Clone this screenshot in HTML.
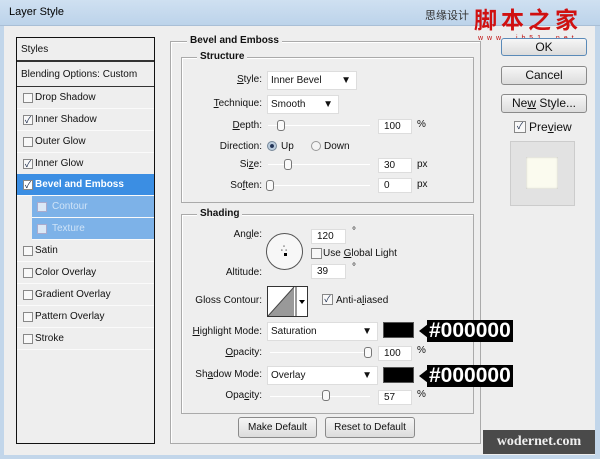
<!DOCTYPE html>
<html><head><meta charset="utf-8"><style>
*{margin:0;padding:0;box-sizing:border-box}
body{width:600px;height:459px;overflow:hidden;background:#eeeeee;font-family:"Liberation Sans","Noto Sans CJK SC",sans-serif;font-size:10px;color:#111;position:relative}
.a{position:absolute;white-space:nowrap}
.title{left:0;top:0;width:600px;height:26px;background:linear-gradient(#cfe0f1,#bcd3ea);border-bottom:1px solid #a9bfd6}
.frame{left:0;top:26px;width:600px;height:433px;border-left:4px solid #c2d6ea;border-right:5px solid #c2d6ea;border-bottom:4px solid #c2d6ea}
.lp{left:16px;top:37px;width:139px;height:407px;border:1px solid #111;background:#eeeeee}
.row{position:absolute;left:0;width:137px;height:22px;line-height:22px;padding-left:18px;border-bottom:1px solid #fafafa}
.cb{position:absolute;width:10px;height:10px;border:1px solid #888;background:#f8f8f8;font-size:9px;line-height:8px;text-align:center;color:#124}
.lbl{position:absolute;text-align:right;width:90px}
.sel{background:#fff;border:1px solid #ddd;padding-left:3px;line-height:17px;height:19px}
.inp{background:#fff;border:1px solid #ddd;padding-left:5px;height:15px;line-height:14px}
.btn{border:1px solid #8a8a8a;border-radius:3px;background:linear-gradient(#f6f6f6,#dcdcdc);text-align:center;font-size:12px}
.line{height:1px;background:#aaa;border-bottom:1px solid #fff}
.knob{width:8px;height:11px;border:1px solid #777;border-radius:3px;background:#fafafa}
.gb{border:1px solid #aaa;box-shadow:1px 1px 0 #fff inset}
.leg{background:#eeeeee;font-weight:bold;font-size:10px;padding:0 3px}
.tag{background:#000;color:#fff;font-weight:bold;font-size:21px;line-height:22px;height:22px;padding:0 2px;font-family:"Liberation Sans",sans-serif}
</style></head><body>
<div class="a title"></div>
<div class="a" style="left:9px;top:6px;font-size:11px;color:#000">Layer Style</div>
<div class="a" style="left:425px;top:7px;font-size:11px;color:#333">思缘设计</div>
<div class="a" style="left:474px;top:1px;font-size:23px;font-weight:bold;color:#d01010;font-family:'Noto Sans CJK SC',sans-serif;letter-spacing:4px">脚本之家</div>
<div class="a" style="left:478px;top:35px;font-size:7px;color:#c01010;letter-spacing:1px">w w w — j b 5 1 — n e t</div>
<div class="a frame"></div>

<div class="a lp">
<div class="row" style="top:0;height:24px;line-height:24px;padding-left:4px;border-bottom:2px solid #333">Styles</div>
<div class="row" style="top:24px;height:25px;line-height:25px;padding-left:4px;border-bottom:1px solid #333">Blending Options: Custom</div>
<div class="row" style="top:49px">Drop Shadow</div>
<div class="row" style="top:71px">Inner Shadow</div>
<div class="row" style="top:93px">Outer Glow</div>
<div class="row" style="top:115px">Inner Glow</div>
<div class="row" style="top:136px;background:#3b8ee3;color:#fff;font-weight:bold">Bevel and Emboss</div>
<div class="row" style="top:158px;left:15px;width:122px;background:#7db2e8;color:#cfe3f7;padding-left:20px">Contour</div>
<div class="row" style="top:180px;left:15px;width:122px;background:#7db2e8;color:#cfe3f7;padding-left:20px">Texture</div>
<div class="row" style="top:202px">Satin</div>
<div class="row" style="top:224px">Color Overlay</div>
<div class="row" style="top:246px">Gradient Overlay</div>
<div class="row" style="top:268px">Pattern Overlay</div>
<div class="row" style="top:290px">Stroke</div>
<div class="cb" style="left:6px;top:55px"></div>
<div class="cb" style="left:6px;top:77px">✓</div>
<div class="cb" style="left:6px;top:99px"></div>
<div class="cb" style="left:6px;top:121px">✓</div>
<div class="cb" style="left:6px;top:142px;background:#fff">✓</div>
<div class="cb" style="left:20px;top:164px;background:#dbe8f6;border-color:#aac"></div>
<div class="cb" style="left:20px;top:186px;background:#dbe8f6;border-color:#aac"></div>
<div class="cb" style="left:6px;top:208px"></div>
<div class="cb" style="left:6px;top:230px"></div>
<div class="cb" style="left:6px;top:252px"></div>
<div class="cb" style="left:6px;top:274px"></div>
<div class="cb" style="left:6px;top:296px"></div>
</div>

<div class="a gb" style="left:170px;top:41px;width:311px;height:403px"></div>
<div class="a leg" style="left:187px;top:35px">Bevel and Emboss</div>
<div class="a gb" style="left:181px;top:57px;width:293px;height:146px"></div>
<div class="a leg" style="left:197px;top:51px">Structure</div>
<div class="a gb" style="left:181px;top:214px;width:293px;height:200px"></div>
<div class="a leg" style="left:197px;top:208px">Shading</div>

<div class="a lbl" style="left:172px;top:74px"><u>S</u>tyle:</div>
<div class="a sel" style="left:267px;top:71px;width:90px">Inner Bevel<span style="position:absolute;right:5px">▼</span></div>
<div class="a lbl" style="left:172px;top:98px"><u>T</u>echnique:</div>
<div class="a sel" style="left:267px;top:95px;width:72px">Smooth<span style="position:absolute;right:5px">▼</span></div>
<div class="a lbl" style="left:172px;top:120px"><u>D</u>epth:</div>
<div class="a line" style="left:268px;top:125px;width:102px"></div>
<div class="a knob" style="left:277px;top:120px"></div>
<div class="a inp" style="left:378px;top:119px;width:34px">100</div>
<div class="a" style="left:417px;top:119px">%</div>
<div class="a lbl" style="left:172px;top:141px">Direction:</div>
<div class="a" style="left:267px;top:141px;width:10px;height:10px;border-radius:50%;border:1px solid #789;background:radial-gradient(#235 30%,#bcd 40%)"></div>
<div class="a" style="left:281px;top:141px">Up</div>
<div class="a" style="left:311px;top:141px;width:10px;height:10px;border-radius:50%;border:1px solid #999;background:#f4f4f4"></div>
<div class="a" style="left:324px;top:141px">Down</div>
<div class="a lbl" style="left:172px;top:159px">Si<u>z</u>e:</div>
<div class="a line" style="left:268px;top:164px;width:102px"></div>
<div class="a knob" style="left:284px;top:159px"></div>
<div class="a inp" style="left:378px;top:158px;width:34px">30</div>
<div class="a" style="left:417px;top:159px">px</div>
<div class="a lbl" style="left:172px;top:180px">So<u>f</u>ten:</div>
<div class="a line" style="left:268px;top:185px;width:102px"></div>
<div class="a knob" style="left:266px;top:180px"></div>
<div class="a inp" style="left:378px;top:178px;width:34px">0</div>
<div class="a" style="left:417px;top:179px">px</div>

<div class="a lbl" style="left:172px;top:229px">An<u>g</u>le:</div>
<div class="a" style="left:266px;top:233px;width:37px;height:37px;border-radius:50%;border:1px solid #555;background:#f7f7f7"></div>
<div class="a" style="left:284px;top:253px;width:3px;height:3px;background:#000"></div>
<div class="a" style="left:280px;top:243px;font-size:8px">∴</div>
<div class="a inp" style="left:311px;top:229px;width:35px">120</div>
<div class="a" style="left:352px;top:226px">°</div>
<div class="a cb" style="left:311px;top:248px;width:11px;height:11px"></div>
<div class="a" style="left:323px;top:248px">Use <u>G</u>lobal Light</div>
<div class="a lbl" style="left:172px;top:267px">Altitude:</div>
<div class="a inp" style="left:311px;top:264px;width:35px">39</div>
<div class="a" style="left:352px;top:262px">°</div>
<div class="a lbl" style="left:172px;top:295px">Gloss Contour:</div>
<div class="a" style="left:267px;top:286px;width:41px;height:31px;border:1px solid #333;background:#fff;overflow:hidden">
<svg width="41" height="31"><polygon points="0,29 26,0 26,29" fill="#999"/><line x1="0" y1="29" x2="26" y2="0" stroke="#444"/><line x1="28" y1="0" x2="28" y2="31" stroke="#333"/><polygon points="31,13 37,13 34,17" fill="#000"/></svg></div>
<div class="a cb" style="left:322px;top:294px;width:11px;height:11px">✓</div>
<div class="a" style="left:336px;top:295px">Anti-a<u>l</u>iased</div>
<div class="a lbl" style="left:172px;top:326px"><u>H</u>ighlight Mode:</div>
<div class="a sel" style="left:267px;top:322px;width:111px">Saturation<span style="position:absolute;right:5px">▼</span></div>
<div class="a" style="left:383px;top:322px;width:31px;height:16px;background:#000;border:1px solid #555"></div>
<div class="a lbl" style="left:172px;top:347px"><u>O</u>pacity:</div>
<div class="a line" style="left:270px;top:352px;width:100px"></div>
<div class="a knob" style="left:364px;top:347px"></div>
<div class="a inp" style="left:378px;top:346px;width:34px">100</div>
<div class="a" style="left:417px;top:345px">%</div>
<div class="a lbl" style="left:172px;top:369px">Sh<u>a</u>dow Mode:</div>
<div class="a sel" style="left:267px;top:366px;width:111px">Overlay<span style="position:absolute;right:5px">▼</span></div>
<div class="a" style="left:383px;top:367px;width:31px;height:16px;background:#000;border:1px solid #555"></div>
<div class="a lbl" style="left:172px;top:390px">Opa<u>c</u>ity:</div>
<div class="a line" style="left:270px;top:396px;width:100px"></div>
<div class="a knob" style="left:322px;top:390px"></div>
<div class="a inp" style="left:378px;top:390px;width:34px">57</div>
<div class="a" style="left:417px;top:389px">%</div>

<svg class="a" style="left:416px;top:320px" width="12" height="70"><polygon points="12,4 3,11 12,18" fill="#000"/><polygon points="12,49 3,56 12,63" fill="#000"/></svg>
<div class="a tag" style="left:427px;top:320px">#000000</div>
<div class="a tag" style="left:427px;top:365px">#000000</div>

<div class="a btn" style="left:238px;top:417px;width:79px;height:21px;line-height:19px;font-size:10px">Make Default</div>
<div class="a btn" style="left:325px;top:417px;width:90px;height:21px;line-height:19px;font-size:10px">Reset to Default</div>

<div class="a btn" style="left:501px;top:38px;width:86px;height:18px;line-height:16px;border-color:#5a8ab8">OK</div>
<div class="a btn" style="left:501px;top:66px;width:86px;height:19px;line-height:17px">Cancel</div>
<div class="a btn" style="left:501px;top:94px;width:86px;height:19px;line-height:17px">Ne<u>w</u> Style...</div>
<div class="a cb" style="left:514px;top:121px;width:12px;height:12px">✓</div>
<div class="a" style="left:529px;top:120px;font-size:12px">Pre<u>v</u>iew</div>
<div class="a" style="left:510px;top:141px;width:65px;height:65px;background:#e2e2e2;border:1px solid #ccc"></div>
<div class="a" style="left:526px;top:157px;width:32px;height:32px;background:#fbfbef;box-shadow:0 0 2px #bbb inset"></div>

<div class="a" style="left:483px;top:430px;width:112px;height:24px;background:#4a4a4a;color:#eee;font-family:'Liberation Serif',serif;font-weight:bold;font-size:14px;line-height:24px;text-align:center">wodernet.com</div>
</body></html>
